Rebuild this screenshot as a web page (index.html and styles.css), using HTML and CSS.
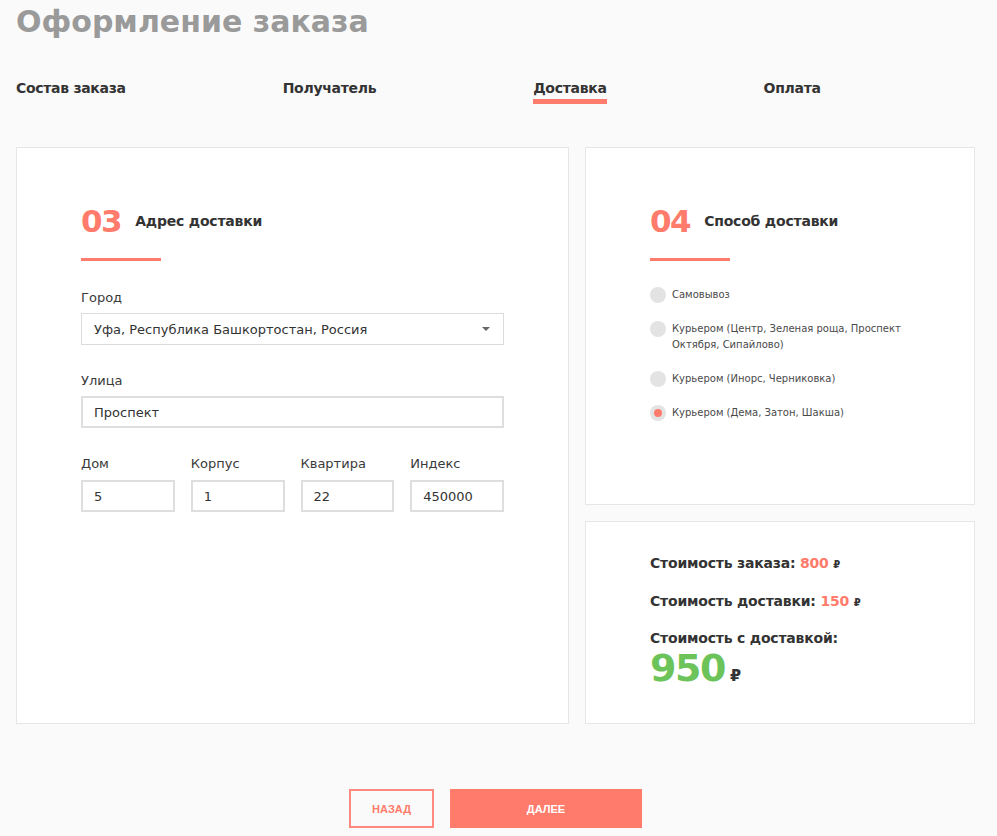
FILE: index.html
```html
<!DOCTYPE html>
<html lang="ru">
<head>
<meta charset="utf-8">
<title>Оформление заказа</title>
<link rel="stylesheet" href="styles.css">
</head>
<body>
<div class="page">
  <h1 class="page-title">Оформление заказа</h1>

  <nav class="steps">
    <a class="step" href="#">Состав заказа</a>
    <a class="step" href="#">Получатель</a>
    <a class="step step--active" href="#">Доставка</a>
    <a class="step" href="#">Оплата</a>
  </nav>

  <div class="checkout">
    <section class="card card--address">
      <header class="block-head">
        <span class="block-num">03</span>
        <h2 class="block-title">Адрес доставки</h2>
      </header>
      <div class="block-rule"></div>

      <div class="field field--first">
        <label class="field-label">Город</label>
        <div class="select">
          <span class="select-value">Уфа, Республика Башкортостан, Россия</span>
          <span class="select-caret"></span>
        </div>
      </div>

      <div class="field">
        <label class="field-label">Улица</label>
        <div class="input">Проспект</div>
      </div>

      <div class="field field-row">
        <div class="field-col">
          <label class="field-label">Дом</label>
          <div class="input">5</div>
        </div>
        <div class="field-col">
          <label class="field-label">Корпус</label>
          <div class="input">1</div>
        </div>
        <div class="field-col">
          <label class="field-label">Квартира</label>
          <div class="input">22</div>
        </div>
        <div class="field-col">
          <label class="field-label">Индекс</label>
          <div class="input">450000</div>
        </div>
      </div>
    </section>

    <div class="side">
      <section class="card card--method">
        <header class="block-head">
          <span class="block-num">04</span>
          <h2 class="block-title">Способ доставки</h2>
        </header>
        <div class="block-rule"></div>

        <ul class="options">
          <li class="option"><span class="radio"></span><span class="option-text">Самовывоз</span></li>
          <li class="option"><span class="radio"></span><span class="option-text">Курьером (Центр, Зеленая роща, Проспект Октября, Сипайлово)</span></li>
          <li class="option"><span class="radio"></span><span class="option-text">Курьером (Инорс, Черниковка)</span></li>
          <li class="option option--checked"><span class="radio"></span><span class="option-text">Курьером (Дема, Затон, Шакша)</span></li>
        </ul>
      </section>

      <section class="card card--total">
        <p class="sum">Стоимость заказа: <span class="sum-value">800</span> <span class="rub">₽</span></p>
        <p class="sum">Стоимость доставки: <span class="sum-value">150</span> <span class="rub">₽</span></p>
        <p class="sum sum--total">Стоимость с доставкой:</p>
        <p class="grand"><span class="grand-value">950</span> <span class="grand-rub">₽</span></p>
      </section>
    </div>
  </div>

  <div class="actions">
    <button class="btn btn--outline" type="button">Назад</button>
    <button class="btn btn--primary" type="button">Далее</button>
  </div>
</div>
</body>
</html>
```

FILE: styles.css
```css
* {
  box-sizing: border-box;
}

html, body {
  margin: 0;
  padding: 0;
  background: #fafafa;
}

body {
  font-family: "DejaVu Sans", "Noto Sans", sans-serif;
  color: #333;
}

.page {
  width: 959px;
  margin: 0 16px;
  padding-top: 2px;
}

/* heading */
.page-title {
  margin: 0;
  font-size: 30px;
  line-height: 40px;
  font-weight: 700;
  color: #9a9a9a;
}

/* step tabs */
.steps {
  display: flex;
  gap: 157px;
  margin-top: 36px;
}

.step {
  font-size: 14px;
  line-height: 20px;
  font-weight: 700;
  letter-spacing: -0.3px;
  color: #333;
  text-decoration: none;
}

.step--active::after {
  content: "";
  display: block;
  height: 5px;
  margin-top: 1px;
  background: #ff7b6b;
}

/* cards */
.checkout {
  display: grid;
  grid-template-columns: 553px 390px;
  gap: 16px;
  margin-top: 43px;
}

.card {
  background: #fff;
  border: 1px solid #e6e6e6;
}

.card--address {
  height: 577px;
  padding: 53px 64px 0;
}

.side {
  display: flex;
  flex-direction: column;
  gap: 16px;
}

.card--method {
  height: 358px;
  padding: 53px 64px 0;
}

.card--total {
  flex: 1;
  padding: 31px 64px 0;
}

/* block heading: number + title */
.block-head {
  display: flex;
  align-items: center;
  gap: 14px;
}

.block-num {
  font-size: 31px;
  line-height: 40px;
  font-weight: 700;
  letter-spacing: -1.5px;
  color: #ff7b6b;
}

.block-title {
  margin: 0;
  font-size: 14px;
  line-height: 20px;
  font-weight: 700;
  letter-spacing: -0.2px;
  color: #333;
}

.block-rule {
  width: 80px;
  height: 3px;
  margin-top: 17px;
  background: #ff7b6b;
}

/* form fields */
.field {
  margin-top: 27px;
}

.field--first {
  margin-top: 28px;
}

.field-label {
  display: block;
  font-size: 13px;
  line-height: 17px;
  color: #3a3a3a;
  margin-bottom: 7px;
}

.select,
.input {
  height: 32px;
  display: flex;
  align-items: center;
  font-size: 13px;
  color: #333;
  background: #fff;
}

.select {
  border: 1px solid #dcdcdc;
  padding: 0 12px;
  justify-content: space-between;
}

.select-caret {
  width: 0;
  height: 0;
  border-left: 4px solid transparent;
  border-right: 4px solid transparent;
  border-top: 4px solid #666;
  margin-right: 1px;
}

.input {
  border: 2px solid #dedede;
  padding: 0 11px;
}

.field-row {
  display: grid;
  grid-template-columns: repeat(4, 1fr);
  gap: 16px;
}

.field-row .field-label {
  margin-bottom: 8px;
}

/* delivery options */
.options {
  list-style: none;
  margin: 26px 0 0;
  padding: 0;
}

.option {
  display: flex;
  align-items: flex-start;
  gap: 6px;
  margin-bottom: 18px;
}

.radio {
  flex: none;
  width: 16px;
  height: 16px;
  border-radius: 50%;
  background: #e3e3e3;
  display: flex;
  align-items: center;
  justify-content: center;
}

.option--checked .radio::after {
  content: "";
  width: 8px;
  height: 8px;
  border-radius: 50%;
  background: #ff7b6b;
}

.option-text {
  font-size: 10px;
  line-height: 16px;
  color: #4a4a4a;
}

/* totals */
.sum {
  margin: 0 0 16px;
  font-size: 14px;
  line-height: 20px;
  font-weight: 700;
  letter-spacing: -0.2px;
  color: #333;
}

.sum + .sum--total {
  margin-top: -1px;
}

.sum--total {
  margin-bottom: 0;
}

.sum-value {
  color: #ff7b6b;
}

.rub {
  font-size: 10px;
  color: #333;
}

.grand {
  margin: 0;
  line-height: 40px;
}

.grand-value {
  font-size: 38px;
  font-weight: 700;
  letter-spacing: -1.5px;
  color: #6cc35a;
}

.grand-rub {
  font-size: 16px;
  font-weight: 700;
  color: #333;
}

/* bottom buttons */
.actions {
  display: flex;
  justify-content: center;
  gap: 16px;
  margin-top: 65px;
}

.btn {
  height: 39px;
  font-family: "Liberation Sans", Arial, sans-serif;
  font-size: 11px;
  font-weight: 700;
  text-transform: uppercase;
  cursor: pointer;
}

.btn--outline {
  width: 85px;
  background: transparent;
  border: 2px solid #ff8a7d;
  color: #ff7b6b;
}

.btn--primary {
  width: 192px;
  background: #ff7b6b;
  border: none;
  color: #fff;
}
```
